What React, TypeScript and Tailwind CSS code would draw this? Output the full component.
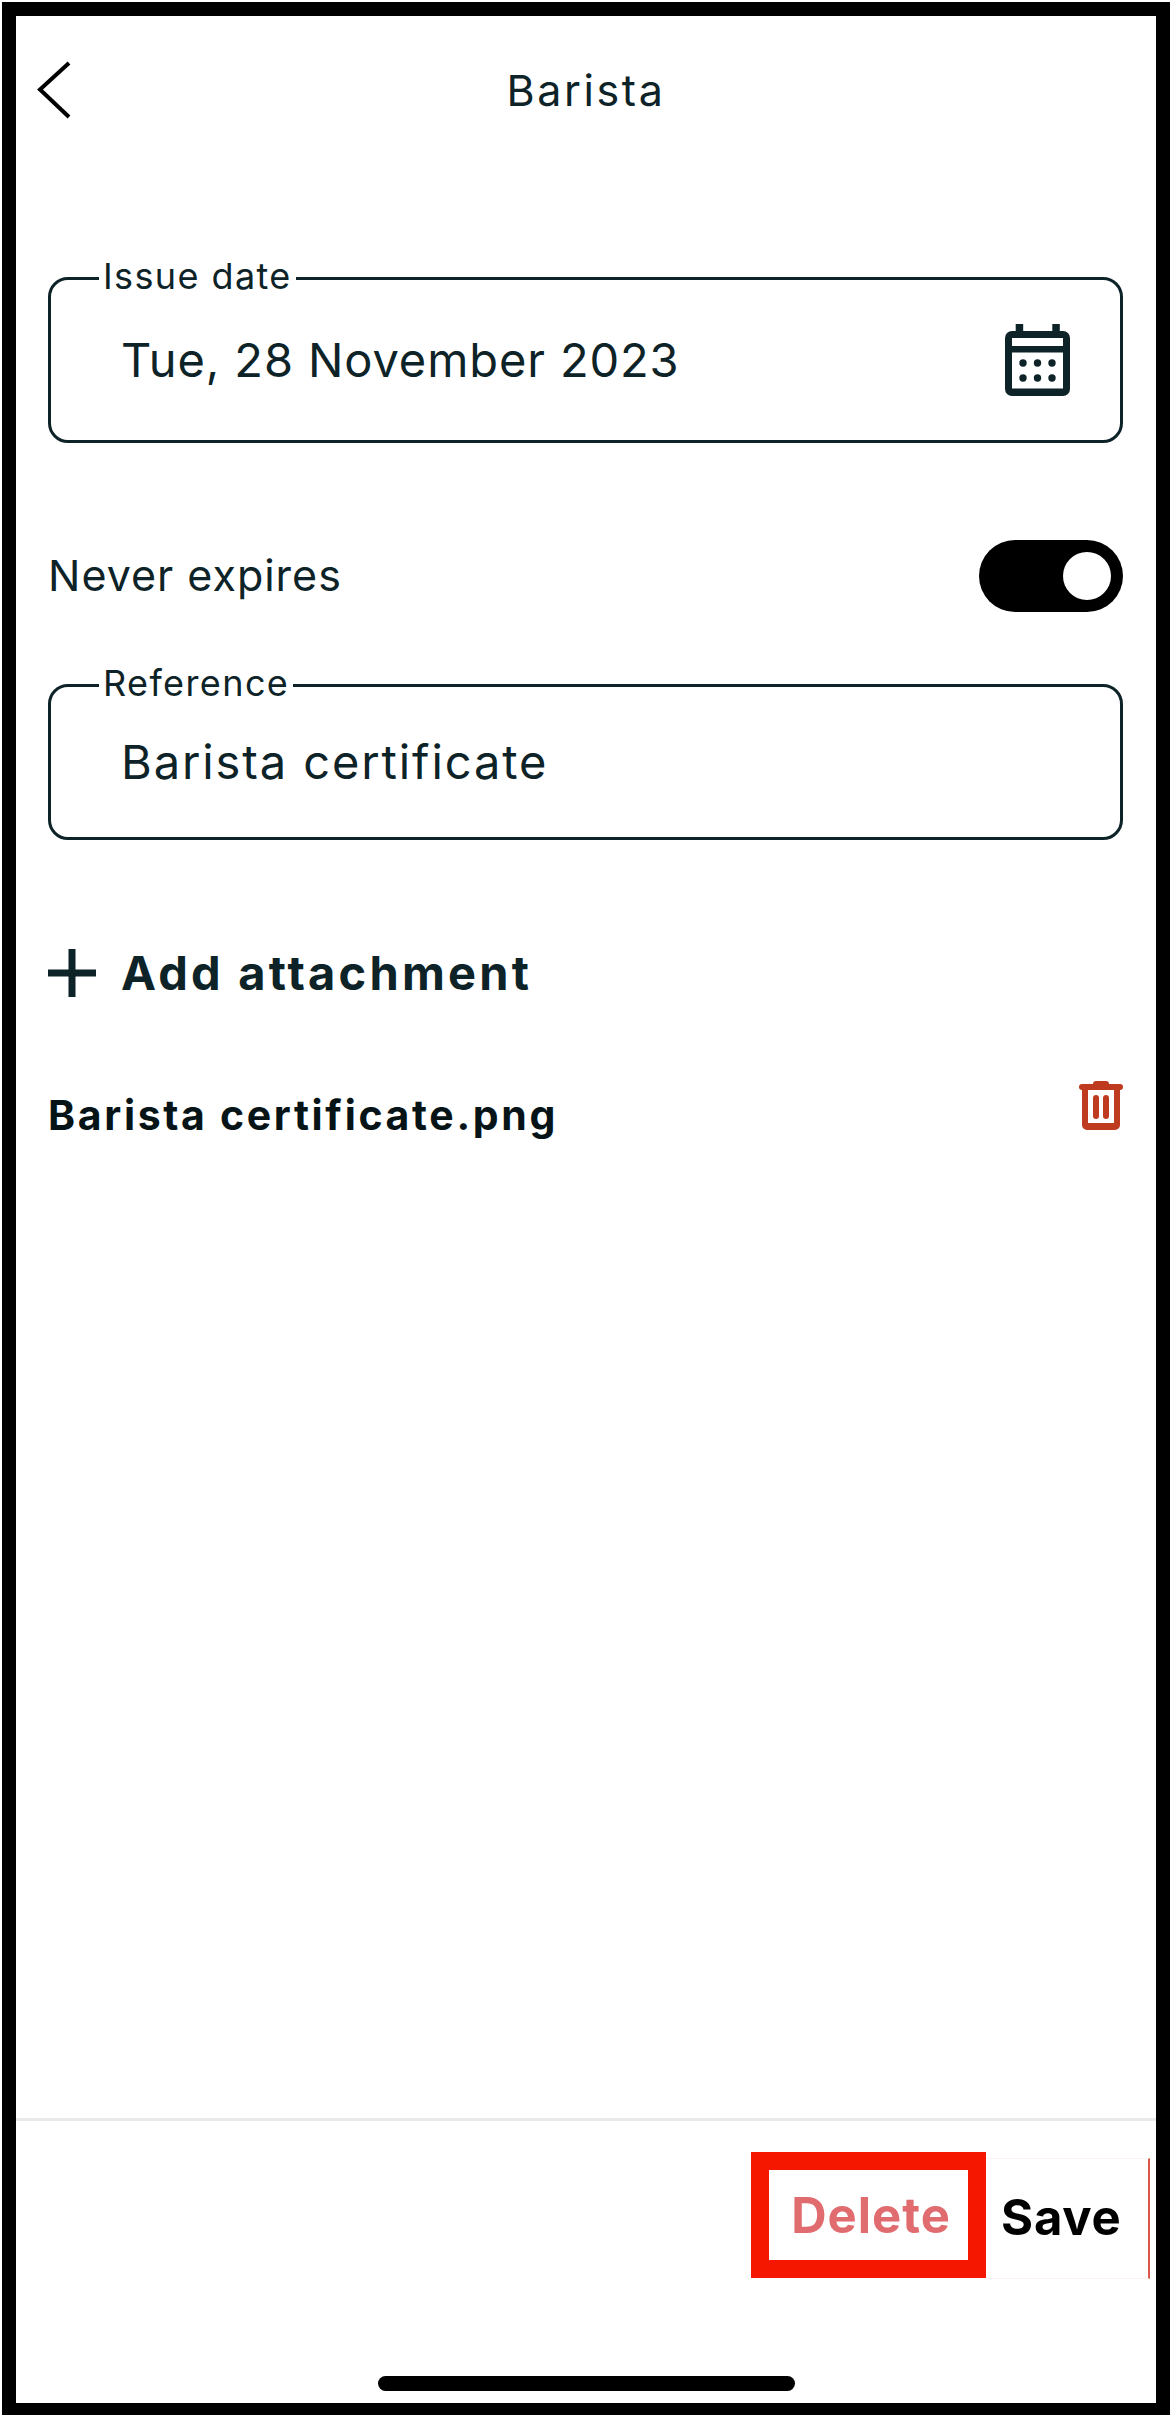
const ink = "text-[#0d2327]";

const OutlinedField = ({ label, value, boxClass, valueClass, children }: { label: string; value: string; boxClass: string; valueClass: string; children?: React.ReactNode }) => (
    <div className={`relative flex items-center justify-between border-[3px] border-[#0d2327] rounded-[20px] pl-[70px] pr-[50px] ${boxClass}`}>
        <span className={`absolute -top-[25px] left-[48px] bg-white px-[4px] text-[36px] leading-[42px] tracking-[1.4px] ${ink}`}>{label}</span>
        <span className={`leading-[56px] ${valueClass} ${ink}`}>{value}</span>
        {children}
    </div>
);

const CalendarIcon = () => (
    <svg width="65" height="72" viewBox="0 0 65 72" className="text-[#0d2327]">
        <rect x="10.7" y="0" width="7.5" height="9" fill="currentColor" />
        <rect x="47.3" y="0" width="7.5" height="9" fill="currentColor" />
        <path
            fillRule="evenodd"
            fill="currentColor"
            d="M7 7h51a7 7 0 0 1 7 7v51a7 7 0 0 1-7 7H7a7 7 0 0 1-7-7V14a7 7 0 0 1 7-7ZM7 14v8h51v-8ZM7 28.5v36h51v-36Z"
        />
        {[18, 32.5, 47].map((x) =>
            [39, 54].map((y) => <circle key={`${x}-${y}`} cx={x} cy={y} r="3.7" fill="currentColor" />)
        )}
    </svg>
);

const TrashIcon = () => (
    <svg width="44" height="49" viewBox="0 0 44 49" fill="#bf3b20">
        <path d="M14 3a3 3 0 0 1 3-3h10a3 3 0 0 1 3 3Z" />
        <rect x="0" y="3" width="44" height="6" rx="3" />
        <path d="M3 7h6v35h26V7h6v37a5 5 0 0 1-5 5H8a5 5 0 0 1-5-5Z" />
        <rect x="14" y="14" width="6" height="24" rx="3" />
        <rect x="24" y="14" width="6" height="24" rx="3" />
    </svg>
);

const App = () => {
    return (
        <div className="w-[1170px] h-[2415px] bg-white pl-[2px] pt-[2px] [font-family:Inter,sans-serif]">
            <div className="h-full flex flex-col border-l-[14px] border-t-[14px] border-r-[14px] border-b-[12px] border-black bg-white">
                <header className="h-[148px] shrink-0 grid grid-cols-3 items-center">
                    <svg width="36" height="58" viewBox="0 0 36 58" fill="none" stroke="#000" strokeWidth="4" className="ml-[20px]">
                        <path d="M33 2 4 28.5 33 56" />
                    </svg>
                    <h1 className={`text-center text-[43px] leading-[50px] font-normal tracking-[2.6px] ${ink}`}>Barista</h1>
                </header>

                <main className="pl-[32px] pr-[33px]">
                    <div className="mt-[113px]">
                        <OutlinedField label="Issue date" value="Tue, 28 November 2023" boxClass="h-[166px]" valueClass="text-[47px] tracking-[0.9px]">
                            <CalendarIcon />
                        </OutlinedField>
                    </div>

                    <div className="mt-[97px] h-[72px] flex items-center justify-between">
                        <span className={`-mt-[2px] text-[43px] leading-[50px] tracking-[1px] ${ink}`}>Never expires</span>
                        <div className="w-[144px] h-[72px] rounded-full bg-black flex items-center justify-end pr-[12px]">
                            <div className="w-[48px] h-[48px] rounded-full bg-white" />
                        </div>
                    </div>

                    <div className="mt-[72px]">
                        <OutlinedField label="Reference" value="Barista certificate" boxClass="h-[156px]" valueClass="text-[47px] tracking-[1.9px]" />
                    </div>

                    <div className="mt-[109px] h-[48px] flex items-center">
                        <svg width="48" height="48" viewBox="0 0 48 48" fill="#0d2327" className="shrink-0">
                            <rect x="0" y="20.5" width="48" height="7" />
                            <rect x="20.5" y="0" width="7" height="48" />
                        </svg>
                        <span className={`ml-[25px] text-[47px] leading-[50px] font-bold tracking-[3.2px] ${ink}`}>Add attachment</span>
                    </div>

                    <div className="mt-[84px] flex items-start justify-between">
                        <span className="mt-[10px] text-[41px] leading-[48px] font-bold tracking-[2.65px] text-[#071417]">Barista certificate.png</span>
                        <TrashIcon />
                    </div>
                </main>

                <footer className="mt-auto border-t-[3px] border-[#e9e9e9] pt-[31px] pb-[12px]">
                    <div className="flex justify-end pr-[6px]">
                        <div className="w-[235px] h-[126px] shrink-0 border-[18px] border-[#f51700] flex items-center justify-center pl-[5px]">
                            <span className="mt-[2px] text-[49px] leading-[60px] font-bold tracking-[1px] text-[#e06c70]">Delete</span>
                        </div>
                        <div className="mt-[6px] w-[164px] h-[121px] border-y border-r-2 border-t-[#fdf3f1] border-b-[#fdf3f1] border-r-[#d9574c] flex items-center pl-[15px]">
                            <span className="-mt-[2px] text-[49px] leading-[60px] font-bold tracking-[0.8px] text-black">Save</span>
                        </div>
                    </div>
                    <div className="mt-[97px] flex justify-center">
                        <div className="w-[417px] h-[15px] rounded-full bg-black" />
                    </div>
                </footer>
            </div>
        </div>
    );
};

export default App;
